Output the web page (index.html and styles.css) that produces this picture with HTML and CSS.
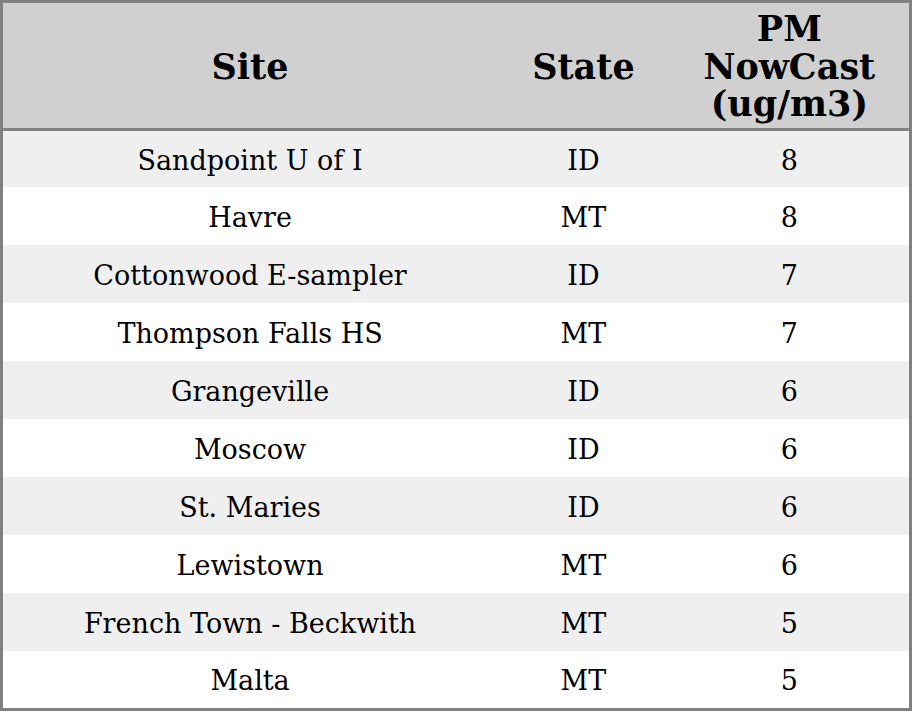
FILE: index.html
```html
<!DOCTYPE html>
<html>
<head>
<meta charset="utf-8">
<link rel="stylesheet" href="styles.css">
</head>
<body>
<table class="aq">
  <colgroup>
    <col class="c-site"><col class="c-state"><col class="c-pm">
  </colgroup>
  <thead>
    <tr><th>Site</th><th>State</th><th>PM<br>NowCast<br>(ug/m3)</th></tr>
  </thead>
  <tbody>
    <tr class="first"><td>Sandpoint U of I</td><td>ID</td><td>8</td></tr>
    <tr><td>Havre</td><td>MT</td><td>8</td></tr>
    <tr><td>Cottonwood E-sampler</td><td>ID</td><td>7</td></tr>
    <tr><td>Thompson Falls HS</td><td>MT</td><td>7</td></tr>
    <tr><td>Grangeville</td><td>ID</td><td>6</td></tr>
    <tr><td>Moscow</td><td>ID</td><td>6</td></tr>
    <tr><td>St. Maries</td><td>ID</td><td>6</td></tr>
    <tr><td>Lewistown</td><td>MT</td><td>6</td></tr>
    <tr><td>French Town - Beckwith</td><td>MT</td><td>5</td></tr>
    <tr class="last"><td>Malta</td><td>MT</td><td>5</td></tr>
  </tbody>
</table>
</body>
</html>
```
FILE: styles.css
```css
html, body {
  margin: 0;
  padding: 0;
  background: #ffffff;
}
.aq {
  border-collapse: collapse;
  border: 3px solid #808080;
  width: 912px;
  table-layout: fixed;
  font-family: "DejaVu Serif", serif;
  color: #000;
}
.c-site { width: 494px; }
.c-state { width: 172px; }
.c-pm { width: 240px; }
.aq th {
  background: #d0d0d0;
  font-size: 35px;
  font-weight: bold;
  height: 123px;
  padding: 2px 0 0 0;
  text-align: center;
  vertical-align: middle;
  border-bottom: 3px solid #808080;
  line-height: 37.5px;
}
.aq td {
  font-size: 27px;
  height: 56px;
  padding: 2px 0 0 0;
  text-align: center;
  vertical-align: middle;
}
.aq tbody tr:nth-child(odd) td { background: #efefef; }
.aq tr.first td { height: 54px; }
.aq tr.last td { height: 55px; }
```
